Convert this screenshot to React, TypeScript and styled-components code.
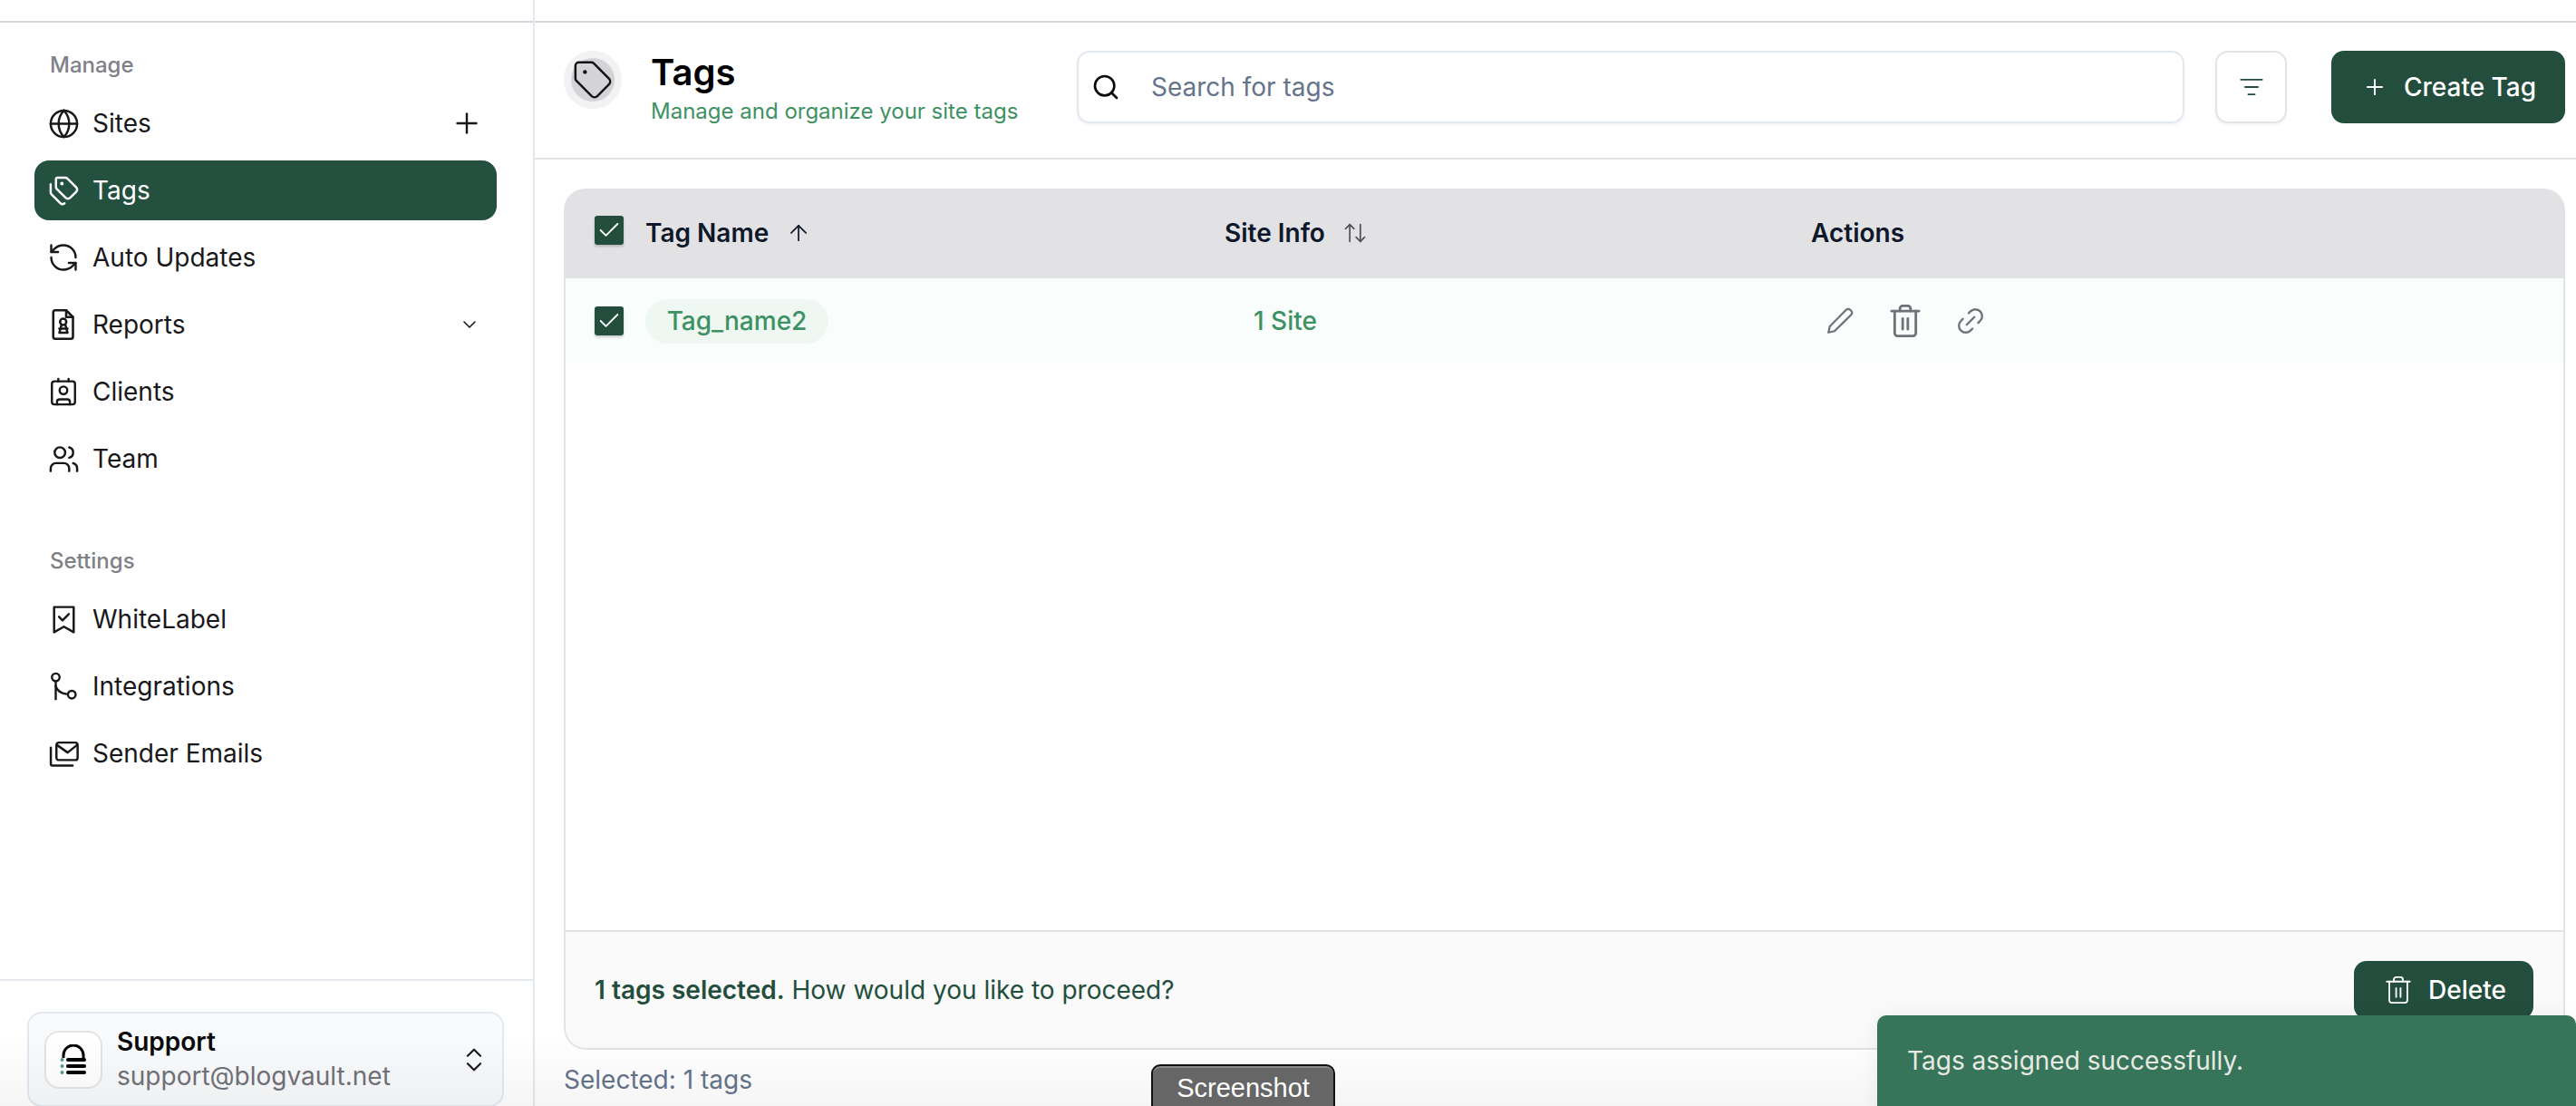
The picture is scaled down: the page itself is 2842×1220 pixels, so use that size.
import React from "react";
import styled, { createGlobalStyle } from "styled-components";
import {
  ArrowUp,
  ArrowUpDown,
  Check,
  ChevronDown,
  ChevronsUpDown,
  Contact,
  Globe,
  Link2,
  ListFilter,
  Plus,
  RefreshCcw,
  Search,
  Tag,
  Tags,
  Users,
} from "lucide-react";

const GlobalStyle = createGlobalStyle`
  html, body {
    margin: 0;
    padding: 0;
    background: #ffffff;
    font-family: "Inter", "Liberation Sans", sans-serif;
  }
  * {
    box-sizing: border-box;
  }
`;

const Page = styled.div`
  position: relative;
  width: 100%;
  height: 100vh;
  display: flex;
  overflow: hidden;
`;

const Sidebar = styled.aside`
  width: 590px;
  flex-shrink: 0;
  display: flex;
  flex-direction: column;
  border-right: 2px solid #e2e8f0;
`;

const TopStrip = styled.div`
  height: 25px;
  flex-shrink: 0;
  border-bottom: 2px solid #d8d8dc;
`;

const NavSection = styled.div<{ $top: number }>`
  margin-top: ${(p) => p.$top}px;
  padding: 0 40px 0 38px;
  display: flex;
  flex-direction: column;
  gap: 8px;
`;

const NavLabel = styled.div`
  height: 34px;
  padding-left: 17px;
  margin-bottom: 7px;
  display: flex;
  align-items: center;
  font-size: 24px;
  font-weight: 500;
  color: #808087;
`;

const NavItem = styled.div<{ $active?: boolean }>`
  height: 66px;
  padding: 0 15px 0 17px;
  display: flex;
  align-items: center;
  gap: 17px;
  border-radius: 16px;
  font-size: 28px;
  color: ${(p) => (p.$active ? "#ffffff" : "#18181b")};
  background: ${(p) => (p.$active ? "#245040" : "transparent")};
`;

const NavIcon = styled.span`
  width: 30px;
  height: 30px;
  flex-shrink: 0;
  display: flex;
  align-items: center;
  justify-content: center;

  svg {
    flex-shrink: 0;
  }
`;

const NavTail = styled.span<{ $inset?: number }>`
  margin-left: auto;
  margin-right: ${(p) => p.$inset ?? 0}px;
  display: flex;
  align-items: center;
`;

const SidebarFooter = styled.div`
  margin-top: auto;
  height: 140px;
  flex-shrink: 0;
  padding: 34px 32px 0 30px;
  border-top: 2px solid #e4e7ec;
`;

const SupportCard = styled.div`
  height: 105px;
  padding: 0 14px 0 17px;
  display: flex;
  align-items: center;
  gap: 16px;
  border: 2px solid #e2e8f0;
  border-radius: 16px;
  background: #f9fafb;
`;

const LogoBox = styled.div`
  width: 64px;
  height: 64px;
  flex-shrink: 0;
  display: flex;
  align-items: center;
  justify-content: center;
  border: 2px solid #e4e4e7;
  border-radius: 16px;
  background: #ffffff;
`;

const SupportText = styled.div`
  flex: 1;
  display: flex;
  flex-direction: column;
  gap: 3px;
`;

const SupportName = styled.div`
  font-size: 28px;
  line-height: 34px;
  font-weight: 600;
  color: #09090b;
`;

const SupportMail = styled.div`
  font-size: 28px;
  line-height: 36px;
  color: #71717a;
`;

const Main = styled.main`
  flex: 1;
  min-width: 0;
  display: flex;
  flex-direction: column;
`;

const Header = styled.header`
  height: 151px;
  flex-shrink: 0;
  padding: 31px 12px 0 32px;
  display: flex;
  align-items: flex-start;
  border-bottom: 2px solid #e4e4e7;
`;

const TitleIcon = styled.div`
  width: 64px;
  height: 64px;
  flex-shrink: 0;
  display: flex;
  align-items: center;
  justify-content: center;
  border: 8px solid #f2f2f3;
  border-radius: 50%;
  background: #d4d4d8;

  svg {
    flex-shrink: 0;
  }
`;

const TitleBlock = styled.div`
  width: 502px;
  padding-left: 32px;
  display: flex;
  flex-direction: column;
`;

const Title = styled.h1`
  margin: 0;
  font-size: 40px;
  line-height: 48px;
  font-weight: 600;
  color: #000000;
`;

const Subtitle = styled.p`
  margin: 3px 0 0;
  font-size: 24px;
  line-height: 32px;
  color: #3d9163;
  white-space: nowrap;
`;

const SearchBox = styled.div`
  flex: 1;
  height: 80px;
  padding-left: 14px;
  display: flex;
  align-items: center;
  gap: 34px;
  border: 2px solid #e2e8f0;
  border-radius: 14px;
  box-shadow: 0 2px 3px rgba(15, 23, 42, 0.05);
  font-size: 28px;
  color: #64748b;
`;

const FilterButton = styled.div`
  width: 79px;
  height: 80px;
  margin-left: 34px;
  flex-shrink: 0;
  display: flex;
  align-items: center;
  justify-content: center;
  border: 2px solid #e4e4e7;
  border-radius: 14px;
  box-shadow: 0 2px 3px rgba(15, 23, 42, 0.05);
`;

const CreateButton = styled.div`
  width: 258px;
  height: 80px;
  margin-left: 49px;
  flex-shrink: 0;
  padding-left: 34px;
  display: flex;
  align-items: center;
  gap: 18px;
  border-radius: 14px;
  background: #234e3d;
  font-size: 28px;
  font-weight: 500;
  color: #ffffff;
`;

const Table = styled.section`
  flex: 1;
  min-height: 0;
  margin: 32px 12px 0 32px;
  display: flex;
  flex-direction: column;
  border-radius: 24px;
  overflow: hidden;
`;

const HeadRow = styled.div`
  height: 99px;
  flex-shrink: 0;
  padding: 0 0 2px 34px;
  display: grid;
  grid-template-columns: 56px 639px 647px 1fr;
  align-items: center;
  background: #e2e2e5;
  font-size: 28px;
  font-weight: 600;
  color: #0f172a;
`;

const HeadCell = styled.div`
  display: flex;
  align-items: center;
  gap: 19px;
`;

const TableBody = styled.div`
  flex: 1;
  border-left: 2px solid #e4e4e7;
  border-right: 2px solid #e4e4e7;
`;

const BodyRow = styled.div`
  height: 94px;
  padding-left: 32px;
  display: grid;
  grid-template-columns: 56px 639px 647px 1fr;
  align-items: center;
  background: #f9fefc;
  font-size: 28px;
  font-weight: 500;
  color: #3d9163;
`;

const CheckBox = styled.div<{ $lift?: number }>`
  width: 32px;
  height: 32px;
  margin-top: ${(p) => -(p.$lift ?? 0)}px;
  display: flex;
  align-items: center;
  justify-content: center;
  border-radius: 3px;
  background: #234e3d;
  box-shadow: 0 2px 3px rgba(0, 0, 0, 0.2);
`;

const Pill = styled.div`
  width: 202px;
  height: 49px;
  display: flex;
  align-items: center;
  justify-content: center;
  border-radius: 25px;
  background: #eff7f3;
`;

const SiteCount = styled.div`
  padding-left: 32px;
`;

const ActionRow = styled.div`
  margin-left: 14px;
  display: flex;
  align-items: center;
  gap: 34px;
  color: #71717a;
`;

const TableFooter = styled.div`
  height: 132px;
  flex-shrink: 0;
  padding: 0 33px 0 32px;
  display: flex;
  align-items: center;
  justify-content: space-between;
  border: 2px solid #e4e4e7;
  border-radius: 0 0 24px 24px;
  background: #fafafa;
  font-size: 28px;
  color: #234e3d;

  b {
    font-weight: 600;
  }
`;

const DeleteButton = styled.div`
  width: 198px;
  height: 64px;
  padding-left: 32px;
  display: flex;
  align-items: center;
  gap: 16px;
  border-radius: 14px;
  background: #234e3d;
  font-weight: 500;
  color: #ffffff;
`;

const SelectedNote = styled.div`
  height: 62px;
  flex-shrink: 0;
  padding: 9px 0 0 32px;
  font-size: 28px;
  line-height: 48px;
  color: #64748b;
`;

const BottomFade = styled.div`
  position: absolute;
  left: 0;
  right: 0;
  bottom: 0;
  height: 80px;
  background: linear-gradient(to bottom, rgba(0, 0, 0, 0), rgba(0, 0, 0, 0.04));
  pointer-events: none;
`;

const Toast = styled.div`
  position: absolute;
  left: 2071px;
  right: 0;
  top: 1120px;
  height: 110px;
  padding: 0 0 10px 33px;
  display: flex;
  align-items: center;
  border-radius: 10px 10px 0 0;
  background: #36755a;
  box-shadow: 0 0 24px rgba(0, 0, 0, 0.06);
  font-size: 28px;
  color: #e9e9e4;
`;

const ScreenshotButton = styled.div`
  position: absolute;
  left: 1270px;
  top: 1174px;
  width: 203px;
  height: 60px;
  padding-bottom: 8px;
  display: flex;
  align-items: center;
  justify-content: center;
  border: 2px solid #111111;
  border-radius: 10px;
  background: #666666;
  box-shadow: inset 0 2px 0 #8a8a8a;
  font-family: "Liberation Sans", sans-serif;
  font-size: 29px;
  color: #ffffff;
`;

type GlyphProps = { size?: number; width?: number };

const Glyph = ({ size = 30, width = 2, children }: GlyphProps & { children: React.ReactNode }) => (
  <svg
    width={size}
    height={size}
    viewBox="0 0 24 24"
    fill="none"
    stroke="currentColor"
    strokeWidth={width}
    strokeLinecap="round"
    strokeLinejoin="round"
  >
    {children}
  </svg>
);

const ReportIcon = () => (
  <Glyph size={36} width={1.7}>
    <path d="M6 1.500h8l5 5V21a1.500 1.500 0 0 1-1.500 1.500h-11.500A1.500 1.500 0 0 1 4.500 21V3A1.500 1.500 0 0 1 6 1.500z" />
    <path d="M14 1.500V6.500h5" />
    <circle cx="11.800" cy="10" r="2.300" />
    <path d="M10.500 12.500l-1.500 5.500h6l-1.500-5.500" />
    <path d="M9 15h6" />
  </Glyph>
);

const BookmarkIcon = () => (
  <Glyph size={37} width={1.6}>
    <path d="M5 3h14v18l-7-4-7 4z" />
    <path d="M8.500 10l2.500 2.500 4.500-4.500" />
  </Glyph>
);

const IntegrationIcon = () => (
  <Glyph size={34} width={1.7}>
    <circle cx="6" cy="5" r="3" />
    <path d="M6 8v14" />
    <path d="M6 12c1 3 4 5.500 8 6" />
    <circle cx="18.500" cy="18.500" r="3" />
  </Glyph>
);

const MailStackIcon = () => (
  <Glyph size={33} width={1.8}>
    <rect x="6" y="3" width="17" height="14" rx="2" />
    <path d="M6.500 5l8.500 6 7.500-6" />
    <path d="M1.500 7v13a1.500 1.500 0 0 0 1.500 1.500h16" />
  </Glyph>
);

const PencilIcon = () => (
  <Glyph size={36} width={1.5}>
    <path d="M3.500 20.500l1-4.500L16.500 3.800a2.100 2.100 0 0 1 3 0l.7.7a2.100 2.100 0 0 1 0 3L8 19.500z" />
  </Glyph>
);

const TrashIcon = ({ size = 40, width = 1.7 }: GlyphProps) => (
  <Glyph size={size} width={width}>
    <path d="M3 5.500h18" />
    <path d="M8.500 5.500V3.800A1.800 1.800 0 0 1 10.300 2h3.400a1.800 1.800 0 0 1 1.800 1.800v1.700" />
    <path d="M5 5.500V20a2 2 0 0 0 2 2h10a2 2 0 0 0 2-2V5.500" />
    <path d="M10.300 10.500v7M13.700 10.500v7" />
  </Glyph>
);

const VaultLogo = () => (
  <svg width="30" height="34" viewBox="0 0 30 34">
    <path d="M4 15V12a11 11 0 0 1 22 0v3" fill="none" stroke="#000000" strokeWidth="3" />
    <rect x="7" y="15" width="22" height="4" rx="2" fill="#000000" />
    <rect x="7" y="22" width="22" height="4" rx="2" fill="#000000" />
    <rect x="7" y="29" width="22" height="4" rx="2" fill="#000000" />
    <circle cx="2.500" cy="17" r="2" fill="#4f9c8f" />
    <circle cx="2.500" cy="24" r="2" fill="#4f9c8f" />
    <circle cx="2.500" cy="31" r="2" fill="#4f9c8f" />
  </svg>
);

const manageItems = [
  { label: "Sites", icon: <Globe size={35} strokeWidth={1.7} />, tail: <Plus size={36} strokeWidth={1.6} /> },
  { label: "Tags", icon: <Tags size={35} strokeWidth={1.7} />, active: true },
  { label: "Auto Updates", icon: <RefreshCcw size={36} strokeWidth={1.6} /> },
  { label: "Reports", icon: <ReportIcon />, tail: <ChevronDown size={24} strokeWidth={1.6} />, inset: 3 },
  { label: "Clients", icon: <Contact size={34} strokeWidth={1.7} /> },
  { label: "Team", icon: <Users size={35} strokeWidth={1.7} /> },
];

const settingItems = [
  { label: "WhiteLabel", icon: <BookmarkIcon /> },
  { label: "Integrations", icon: <IntegrationIcon /> },
  { label: "Sender Emails", icon: <MailStackIcon /> },
];

const Tick = () => <Check size={28} color="#ffffff" strokeWidth={1.6} />;

const App = () => {
  return (
    <Page>
      <GlobalStyle />
      <Sidebar>
        <TopStrip />
        <NavSection $top={29}>
          <NavLabel>Manage</NavLabel>
          {manageItems.map((item) => (
            <NavItem key={item.label} $active={item.active}>
              <NavIcon>{item.icon}</NavIcon>
              {item.label}
              {item.tail && <NavTail $inset={item.inset}>{item.tail}</NavTail>}
            </NavItem>
          ))}
        </NavSection>
        <NavSection $top={62}>
          <NavLabel>Settings</NavLabel>
          {settingItems.map((item) => (
            <NavItem key={item.label}>
              <NavIcon>{item.icon}</NavIcon>
              {item.label}
            </NavItem>
          ))}
        </NavSection>
        <SidebarFooter>
          <SupportCard>
            <LogoBox>
              <VaultLogo />
            </LogoBox>
            <SupportText>
              <SupportName>Support</SupportName>
              <SupportMail>support@blogvault.net</SupportMail>
            </SupportText>
            <ChevronsUpDown size={34} strokeWidth={1.5} color="#18181b" />
          </SupportCard>
        </SidebarFooter>
      </Sidebar>

      <Main>
        <TopStrip />
        <Header>
          <TitleIcon>
            <Tag size={46} strokeWidth={1.3} color="#111111" />
          </TitleIcon>
          <TitleBlock>
            <Title>Tags</Title>
            <Subtitle>Manage and organize your site tags</Subtitle>
          </TitleBlock>
          <SearchBox>
            <Search size={32} strokeWidth={2} color="#09090b" />
            Search for tags
          </SearchBox>
          <FilterButton>
            <ListFilter size={28} strokeWidth={1.6} color="#234e3d" />
          </FilterButton>
          <CreateButton>
            <Plus size={28} strokeWidth={1.6} />
            Create Tag
          </CreateButton>
        </Header>

        <Table>
          <HeadRow>
            <CheckBox $lift={6}>
              <Tick />
            </CheckBox>
            <HeadCell>
              Tag Name
              <ArrowUp size={28} strokeWidth={1.5} />
            </HeadCell>
            <HeadCell>
              Site Info
              <ArrowUpDown size={28} strokeWidth={1.5} color="#52525b" />
            </HeadCell>
            <HeadCell>Actions</HeadCell>
          </HeadRow>
          <TableBody>
            <BodyRow>
              <CheckBox>
                <Tick />
              </CheckBox>
              <div>
                <Pill>Tag_name2</Pill>
              </div>
              <SiteCount>1 Site</SiteCount>
              <ActionRow>
                <PencilIcon />
                <TrashIcon />
                <Link2 size={36} strokeWidth={1.6} style={{ transform: "rotate(-45deg)" }} />
              </ActionRow>
            </BodyRow>
          </TableBody>
          <TableFooter>
            <span>
              <b>1 tags selected.</b> How would you like to proceed?
            </span>
            <DeleteButton>
              <TrashIcon size={34} width={1.3} />
              Delete
            </DeleteButton>
          </TableFooter>
        </Table>
        <SelectedNote>Selected: 1 tags</SelectedNote>
      </Main>

      <BottomFade />
      <ScreenshotButton>Screenshot</ScreenshotButton>
      <Toast>Tags assigned successfully.</Toast>
    </Page>
  );
};

export default App;
